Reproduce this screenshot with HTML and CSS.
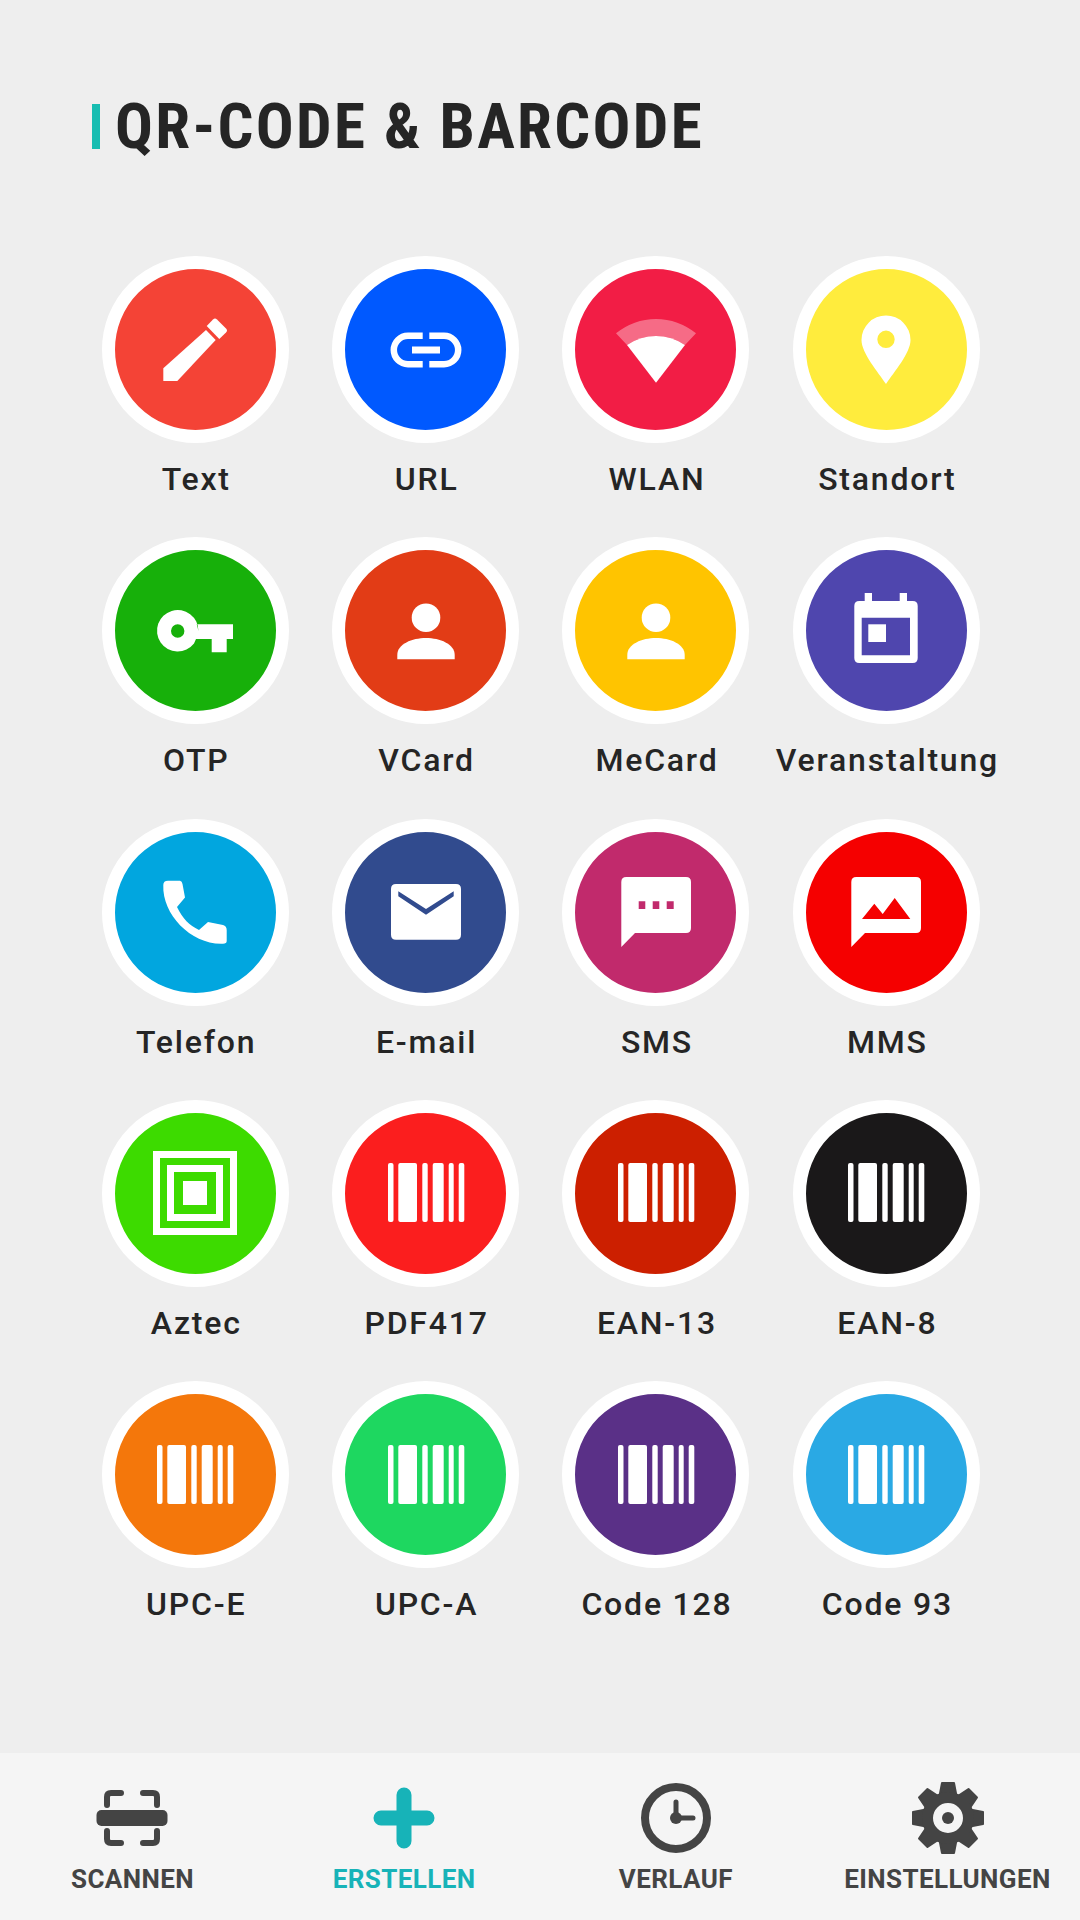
FILE: index.html
```html
<!DOCTYPE html>
<html lang="de">
<head>
  <meta charset="UTF-8">
  <title>QR-Code &amp; Barcode</title>
  <link rel="stylesheet" href="styles.css">
</head>
<body>

  <svg class="defs" width="0" height="0">
    <symbol id="i-barcode" viewBox="-80 -80 160 160">
      <rect x="-38" y="-30" width="5.5" height="59" rx="2"/>
      <rect x="-27.7" y="-30" width="18.7" height="59" rx="2"/>
      <rect x="-3.7" y="-30" width="5.4" height="59" rx="2"/>
      <rect x="6.7" y="-30" width="11" height="59" rx="2"/>
      <rect x="22.7" y="-30" width="5" height="59" rx="2"/>
      <rect x="32.7" y="-30" width="5.6" height="59" rx="2"/>
    </symbol>
    <symbol id="i-person" viewBox="-80 -80 160 160">
      <circle cx="0" cy="-13.3" r="14.3"/>
      <path d="M-28.7 28.3V24C-28.7 13-14 7 0 7S28.7 13 28.7 24V28.3Z"/>
    </symbol>
  </svg>

  <main class="screen">
    <h1 class="title">QR-CODE &amp; BARCODE</h1>

    <!-- Code types -->
    <div class="grid">
      <div class="item">
        <div class="disc c-text">
          <svg class="glyph" viewBox="-80 -80 160 160">
            <path d="M-31.7 18.3L11-20 20.7-10-17.7 31H-31.7Z"/>
            <path d="M11.7-24L18-30.5Q20-32.500 22-30.500L31-21.500Q33-19.500 31-17.500L24.3-11Z"/>
          </svg>
        </div>
        <span class="label">Text</span>
      </div>
      <div class="item">
        <div class="disc c-url">
          <svg class="glyph" viewBox="-80 -80 160 160">
            <path class="line" d="M-3.3-14.2H-18A14.2 14.2 0 0 0-18 14.2H-3.3"/>
            <path class="line" d="M3.3-14.2H18A14.2 14.2 0 0 1 18 14.2H3.3"/>
            <rect x="-14" y="-3.5" width="28" height="7"/>
          </svg>
        </div>
        <span class="label">URL</span>
      </div>
      <div class="item">
        <div class="disc c-wlan">
          <svg class="glyph" viewBox="-80 -80 160 160">
            <path opacity="0.35" d="M-40-16.7A63 63 0 0 1 40-16.7L29-5A51 51 0 0 0-29-5Z"/>
            <path d="M0 32.7L-29-5A51 51 0 0 1 29-5Z"/>
          </svg>
        </div>
        <span class="label">WLAN</span>
      </div>
      <div class="item">
        <div class="disc c-place">
          <svg class="glyph" viewBox="-80 -80 160 160">
            <path fill-rule="evenodd" d="M0 34C-8 22-24.5 3-24.5-10A24.5 24.5 0 0 1 24.5-10C24.5 3 8 22 0 34ZM8.7-10.7A8.7 8.7 0 1 0-8.7-10.7 8.7 8.7 0 1 0 8.7-10.7Z"/>
          </svg>
        </div>
        <span class="label">Standort</span>
      </div>

      <div class="item">
        <div class="disc c-otp">
          <svg class="glyph" viewBox="-80 -80 160 160">
            <path fill-rule="evenodd" d="M3.4 0A20.7 20.7 0 1 0-1 12.5L1 8H16.7V21.3H31.7V8H38V-6.7H1.7Q2.8-3 3.4 0ZM-10.6 0A6.7 6.7 0 1 1-24 0 6.7 6.7 0 1 1-10.6 0Z"/>
          </svg>
        </div>
        <span class="label">OTP</span>
      </div>
      <div class="item">
        <div class="disc c-vcard">
          <svg class="glyph"><use href="#i-person"/></svg>
        </div>
        <span class="label">VCard</span>
      </div>
      <div class="item">
        <div class="disc c-mecard">
          <svg class="glyph"><use href="#i-person"/></svg>
        </div>
        <span class="label">MeCard</span>
      </div>
      <div class="item">
        <div class="disc c-event">
          <svg class="glyph" viewBox="-80 -80 160 160">
            <path fill-rule="evenodd" d="M-21.3-38H-14V-30H13.7V-38H21V-30H26.7Q31.7-30 31.7-25V27Q31.7 32 26.7 32H-26.7Q-31.7 32-31.7 27V-25Q-31.7-30-26.7-30H-21.3ZM-24.3-13.3V24.3H24V-13.3Z"/>
            <rect x="-17.7" y="-6.7" width="17.7" height="17.7"/>
          </svg>
        </div>
        <span class="label">Veranstaltung</span>
      </div>

      <div class="item">
        <div class="disc c-phone">
          <svg class="glyph" viewBox="-80 -80 160 160">
            <path d="M-31.7-27Q-31.7-31.3-27-31.3H-15Q-13-31-12.5-28L-10-14.5-18-5C-12 7-6 13 4 18L13 10 28 13Q31.7 14 31.7 18V29Q31.7 31.7 28 31.7C-3 33-33 3-31.7-27Z"/>
          </svg>
        </div>
        <span class="label">Telefon</span>
      </div>
      <div class="item">
        <div class="disc c-mail">
          <svg class="glyph" viewBox="-80 -80 160 160">
            <path fill-rule="evenodd" d="M-30-28H30Q35-28 35-23V22.7Q35 27.7 30 27.7H-30Q-35 27.7-35 22.7V-23Q-35-28-30-28ZM-27.7-20.7V-15.7L0 2.7 27.7-15.7V-20.7L0-3Z"/>
          </svg>
        </div>
        <span class="label">E-mail</span>
      </div>
      <div class="item">
        <div class="disc c-sms">
          <svg class="glyph" viewBox="-80 -80 160 160">
            <path fill-rule="evenodd" d="M-29.7-35H30Q35-35 35-30V16Q35 21 30 21H-21L-34.7 35V-30Q-34.7-35-29.7-35ZM-17.3-10.7V-3H-10.7V-10.7ZM-3.3-10.7V-3H3.3V-10.7ZM10.7-10.7V-3H17.7V-10.7Z"/>
          </svg>
        </div>
        <span class="label">SMS</span>
      </div>
      <div class="item">
        <div class="disc c-mms">
          <svg class="glyph" viewBox="-80 -80 160 160">
            <path fill-rule="evenodd" d="M-29.7-35H30Q35-35 35-30V16Q35 21 30 21H-21L-34.7 35V-30Q-34.7-35-29.7-35ZM-24 7H24.3L8.7-14-3.3 2-11.7-8.3Z"/>
          </svg>
        </div>
        <span class="label">MMS</span>
      </div>

      <div class="item">
        <div class="disc c-aztec">
          <svg class="glyph" viewBox="-80 -80 160 160">
            <path fill-rule="evenodd" d="M-42-42H42V42H-42ZM-35-35V35H35V-35ZM-28-28H28V28H-28ZM-21-21V21H21V-21ZM-12-12H12V12H-12Z"/>
          </svg>
        </div>
        <span class="label">Aztec</span>
      </div>
      <div class="item">
        <div class="disc c-pdf"><svg class="glyph"><use href="#i-barcode"/></svg></div>
        <span class="label">PDF417</span>
      </div>
      <div class="item">
        <div class="disc c-ean13"><svg class="glyph"><use href="#i-barcode"/></svg></div>
        <span class="label">EAN-13</span>
      </div>
      <div class="item">
        <div class="disc c-ean8"><svg class="glyph"><use href="#i-barcode"/></svg></div>
        <span class="label">EAN-8</span>
      </div>

      <div class="item">
        <div class="disc c-upce"><svg class="glyph"><use href="#i-barcode"/></svg></div>
        <span class="label">UPC-E</span>
      </div>
      <div class="item">
        <div class="disc c-upca"><svg class="glyph"><use href="#i-barcode"/></svg></div>
        <span class="label">UPC-A</span>
      </div>
      <div class="item">
        <div class="disc c-code128"><svg class="glyph"><use href="#i-barcode"/></svg></div>
        <span class="label">Code 128</span>
      </div>
      <div class="item">
        <div class="disc c-code93"><svg class="glyph"><use href="#i-barcode"/></svg></div>
        <span class="label">Code 93</span>
      </div>
    </div>

    <!-- Bottom navigation -->
    <nav class="tabs">
      <a class="tab">
        <svg class="tab-icon" viewBox="-36 -36 72 72">
          <rect x="-35.500" y="-8" width="71" height="16" rx="5"/>
          <path class="tab-line" d="M-11-25H-21Q-25-25-25-21V-13"/>
          <path class="tab-line" d="M11-25H21Q25-25 25-21V-13"/>
          <path class="tab-line" d="M-11 25H-21Q-25 25-25 21V13"/>
          <path class="tab-line" d="M11 25H21Q25 25 25 21V13"/>
        </svg>
        <span>SCANNEN</span>
      </a>
      <a class="tab active">
        <svg class="tab-icon" viewBox="-36 -36 72 72">
          <path class="tab-plus" d="M0-23V23M-23 0H23"/>
        </svg>
        <span>ERSTELLEN</span>
      </a>
      <a class="tab">
        <svg class="tab-icon" viewBox="-36 -36 72 72">
          <circle class="tab-ring" cx="0" cy="0" r="31"/>
          <path class="tab-hand" d="M0 0V-16M0 0H17"/>
          <circle cx="0" cy="0" r="6"/>
        </svg>
        <span>VERLAUF</span>
      </a>
      <a class="tab">
        <svg class="tab-icon" viewBox="-36 -36 72 72">
          <g class="tab-teeth">
            <path d="M-6-35H6L8.500-22H-8.500Z"/>
            <path transform="rotate(45)" d="M-6-35H6L8.500-22H-8.500Z"/>
            <path transform="rotate(90)" d="M-6-35H6L8.500-22H-8.500Z"/>
            <path transform="rotate(135)" d="M-6-35H6L8.500-22H-8.500Z"/>
            <path transform="rotate(180)" d="M-6-35H6L8.500-22H-8.500Z"/>
            <path transform="rotate(225)" d="M-6-35H6L8.500-22H-8.500Z"/>
            <path transform="rotate(270)" d="M-6-35H6L8.500-22H-8.500Z"/>
            <path transform="rotate(315)" d="M-6-35H6L8.500-22H-8.500Z"/>
          </g>
          <path fill-rule="evenodd" d="M26 0A26 26 0 1 1-26 0 26 26 0 1 1 26 0ZM15 0A15 15 0 1 0-15 0 15 15 0 1 0 15 0Z"/>
          <circle cx="0" cy="0" r="6"/>
        </svg>
        <span>EINSTELLUNGEN</span>
      </a>
    </nav>
  </main>

</body>
</html>
```

FILE: styles.css
```css
body {
  margin: 0;
  background-color: #eeeeee;
  font-family: Roboto, "Liberation Sans", sans-serif;
}

.defs {
  position: absolute;
}

.screen {
  display: flex;
  flex-direction: column;
  width: 1080px;
  height: 1920px;
  overflow: hidden;
}

/* Heading */
.title {
  margin: 104px 0 0 92px;
  padding-left: 15px;
  border-left: 8px solid #17bdb1;
  height: 45px;
  display: flex;
  align-items: center;
  font-size: 63px;
  font-weight: 700;
  font-stretch: 87%;
  letter-spacing: 2.3px;
  color: #252525;
  white-space: nowrap;
}

/* Grid of code types */
.grid {
  display: grid;
  grid-template-columns: repeat(4, 230.4px);
  grid-auto-rows: 281.25px;
  margin: 107px 0 0 80px;
}

.item {
  display: flex;
  flex-direction: column;
  align-items: center;
}

.disc {
  width: 161px;
  height: 161px;
  border: 13.5px solid #ffffff;
  border-radius: 50%;
}

.glyph {
  display: block;
  width: 160px;
  height: 160px;
  margin: 0.5px;
  fill: #ffffff;
}

.line {
  fill: none;
  stroke: #ffffff;
  stroke-width: 6.5;
}

.label {
  margin-top: 17px;
  padding-left: 2px;
  font-size: 32px;
  line-height: 38px;
  font-weight: 500;
  letter-spacing: 1.8px;
  color: #252525;
  white-space: nowrap;
}

.c-text { background-color: #f44336; }
.c-url { background-color: #0059ff; }
.c-wlan { background-color: #f21d45; }
.c-place { background-color: #ffec3d; }
.c-otp { background-color: #17b00a; }
.c-vcard { background-color: #e23c16; }
.c-mecard { background-color: #ffc400; }
.c-event { background-color: #4f46ae; }
.c-phone { background-color: #01a6df; }
.c-mail { background-color: #314b8e; }
.c-sms { background-color: #c12a6c; }
.c-mms { background-color: #f50000; }
.c-aztec { background-color: #3ddb00; }
.c-pdf { background-color: #fb1e1e; }
.c-ean13 { background-color: #cc1f00; }
.c-ean8 { background-color: #1a1819; }
.c-upce { background-color: #f4770b; }
.c-upca { background-color: #1ed760; }
.c-code128 { background-color: #5a3087; }
.c-code93 { background-color: #2aa9e4; }

/* Bottom navigation */
.tabs {
  display: grid;
  grid-template-columns: repeat(4, 271.7px);
  justify-content: center;
  margin-top: auto;
  height: 167px;
  background-color: #f5f5f5;
  box-sizing: border-box;
  padding-top: 29px;
}

.tab {
  display: flex;
  flex-direction: column;
  align-items: center;
  color: #444444;
  font-size: 26px;
  font-weight: 700;
  letter-spacing: 0.4px;
  line-height: 30px;
  white-space: nowrap;
}

.tab.active {
  color: #17b3b8;
}

.tab-icon {
  display: block;
  width: 72px;
  height: 72px;
  margin-bottom: 10px;
  fill: currentColor;
}

.tab-line {
  fill: none;
  stroke: currentColor;
  stroke-width: 6;
  stroke-linecap: round;
}

.tab-plus {
  fill: none;
  stroke: currentColor;
  stroke-width: 15;
  stroke-linecap: round;
}

.tab-ring {
  fill: none;
  stroke: currentColor;
  stroke-width: 8;
}

.tab-hand {
  fill: none;
  stroke: currentColor;
  stroke-width: 5;
  stroke-linecap: round;
}

.tab-teeth {
  stroke: currentColor;
  stroke-width: 2;
  stroke-linejoin: round;
}
```
